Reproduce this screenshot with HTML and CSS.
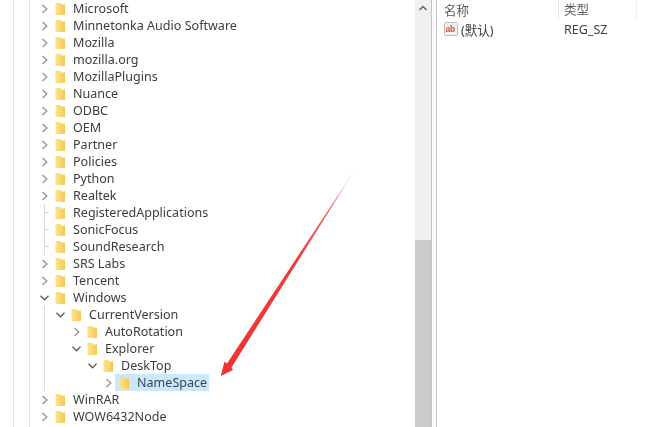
FILE: index.html
```html
<!DOCTYPE html>
<html lang="zh">
<head>
<meta charset="utf-8">
<title>Registry Editor</title>
<link rel="stylesheet" href="styles.css">
</head>
<body>
<svg class="defs" width="0" height="0" aria-hidden="true">
  <defs>
    <linearGradient id="fold" x1="0" x2="1" y1="0" y2="0">
      <stop offset="0" stop-color="#fbe391"/>
      <stop offset="0.55" stop-color="#f9d66f"/>
      <stop offset="1" stop-color="#f4c752"/>
    </linearGradient>
    <symbol id="folder" viewBox="0 0 10 12">
      <path d="M0.5 0 L5.5 0 L6 1.5 L10 1.5 L10 12 L0.5 12 Z" fill="url(#fold)"/>
    </symbol>
    <symbol id="right" viewBox="0 0 9 10">
      <path d="M2.5 1 L6.8 5 L2.5 9" fill="none" stroke="#999" stroke-width="1.4"/>
    </symbol>
    <symbol id="down" viewBox="0 0 9 10">
      <path d="M0.5 2.8 L4.5 6.8 L8.5 2.8" fill="none" stroke="#5e5e5e" stroke-width="1.4"/>
    </symbol>
  </defs>
</svg>
<main class="app">
  <div class="gutter outer"></div>
  <div class="gutter inner"></div>
  <section class="tree">
    <div class="row"><svg class="chev"><use href="#right"/></svg><svg class="fold"><use href="#folder"/></svg><span>Microsoft</span></div>
    <div class="row"><svg class="chev"><use href="#right"/></svg><svg class="fold"><use href="#folder"/></svg><span>Minnetonka Audio Software</span></div>
    <div class="row"><svg class="chev"><use href="#right"/></svg><svg class="fold"><use href="#folder"/></svg><span>Mozilla</span></div>
    <div class="row"><svg class="chev"><use href="#right"/></svg><svg class="fold"><use href="#folder"/></svg><span>mozilla.org</span></div>
    <div class="row"><svg class="chev"><use href="#right"/></svg><svg class="fold"><use href="#folder"/></svg><span>MozillaPlugins</span></div>
    <div class="row"><svg class="chev"><use href="#right"/></svg><svg class="fold"><use href="#folder"/></svg><span>Nuance</span></div>
    <div class="row"><svg class="chev"><use href="#right"/></svg><svg class="fold"><use href="#folder"/></svg><span>ODBC</span></div>
    <div class="row"><svg class="chev"><use href="#right"/></svg><svg class="fold"><use href="#folder"/></svg><span>OEM</span></div>
    <div class="row"><svg class="chev"><use href="#right"/></svg><svg class="fold"><use href="#folder"/></svg><span>Partner</span></div>
    <div class="row"><svg class="chev"><use href="#right"/></svg><svg class="fold"><use href="#folder"/></svg><span>Policies</span></div>
    <div class="row"><svg class="chev"><use href="#right"/></svg><svg class="fold"><use href="#folder"/></svg><span>Python</span></div>
    <div class="row"><svg class="chev"><use href="#right"/></svg><svg class="fold"><use href="#folder"/></svg><span>Realtek</span></div>
    <div class="group">
      <div class="row"><i class="tick"></i><svg class="fold"><use href="#folder"/></svg><span>RegisteredApplications</span></div>
      <div class="row"><i class="tick"></i><svg class="fold"><use href="#folder"/></svg><span>SonicFocus</span></div>
      <div class="row"><i class="tick"></i><svg class="fold"><use href="#folder"/></svg><span>SoundResearch</span></div>
    </div>
    <div class="row"><svg class="chev"><use href="#right"/></svg><svg class="fold"><use href="#folder"/></svg><span>SRS Labs</span></div>
    <div class="row"><svg class="chev"><use href="#right"/></svg><svg class="fold"><use href="#folder"/></svg><span>Tencent</span></div>
    <div class="row"><svg class="chev"><use href="#down"/></svg><svg class="fold"><use href="#folder"/></svg><span>Windows</span></div>
    <div class="group">
      <div class="row l1"><svg class="chev"><use href="#down"/></svg><svg class="fold"><use href="#folder"/></svg><span>CurrentVersion</span></div>
      <div class="row l2"><svg class="chev"><use href="#right"/></svg><svg class="fold"><use href="#folder"/></svg><span>AutoRotation</span></div>
      <div class="row l2"><svg class="chev"><use href="#down"/></svg><svg class="fold"><use href="#folder"/></svg><span>Explorer</span></div>
      <div class="row l3"><svg class="chev"><use href="#down"/></svg><svg class="fold"><use href="#folder"/></svg><span>DeskTop</span></div>
      <div class="row l4"><svg class="chev"><use href="#right"/></svg><div class="selected"><svg class="fold"><use href="#folder"/></svg><span>NameSpace</span></div></div>
    </div>
    <div class="row"><svg class="chev"><use href="#right"/></svg><svg class="fold"><use href="#folder"/></svg><span>WinRAR</span></div>
    <div class="row"><svg class="chev"><use href="#right"/></svg><svg class="fold"><use href="#folder"/></svg><span>WOW6432Node</span></div>
    <div class="row"><svg class="chev"><use href="#right"/></svg><svg class="fold"><use href="#folder"/></svg></div>
  </section>
  <div class="scrollbar">
    <svg class="up" width="10" height="8" viewBox="0 0 10 8"><path d="M1.5 6 L5 2.5 L8.5 6" fill="none" stroke="#606060" stroke-width="1.4"/></svg>
    <div class="thumb"></div>
  </div>
  <div class="splitter"></div>
  <section class="list">
    <div class="head">
      <div class="col name">名称</div>
      <div class="col type">类型</div>
      <div class="col rest"></div>
    </div>
    <div class="item">
      <div class="col name">
        <svg class="ab" width="15" height="14" viewBox="0 0 15 14">
          <rect x="0.5" y="0.5" width="13" height="13" rx="1" fill="#f6f1ef" stroke="#c4bcbc"/>
          <text x="1.4" y="10" class="abtext">ab</text>
        </svg>
        <span>(默认)</span>
      </div>
      <div class="col type">REG_SZ</div>
    </div>
  </section>
  <svg class="arrow" width="654" height="427" viewBox="0 0 654 427" aria-hidden="true">
    <defs>
      <linearGradient id="shaft" gradientUnits="userSpaceOnUse" x1="358" y1="165" x2="225" y2="372">
        <stop offset="0" stop-color="#f6b0b0" stop-opacity="0.3"/>
        <stop offset="0.2" stop-color="#ef6a6a"/>
        <stop offset="0.45" stop-color="#ee3c3c"/>
        <stop offset="1" stop-color="#f23333"/>
      </linearGradient>
    </defs>
    <path d="M358 165 L231.5 367.5 L233 370 L220.7 376 L224.5 361.5 L227 363.5 Z" fill="url(#shaft)"/>
  </svg>
</main>
</body>
</html>
```
FILE: styles.css
```css
html, body {
  margin: 0;
  padding: 0;
  background: #fff;
}
.defs {
  position: absolute;
}
.app {
  position: relative;
  display: flex;
  width: 654px;
  height: 427px;
  overflow: hidden;
  background: #fff;
  color: #3d3d3d;
  font-family: "Noto Sans", "Noto Sans CJK SC", sans-serif;
  font-size: 12.55px;
  filter: blur(0.5px);
}
.gutter {
  flex: none;
  border-right: 1px solid #e4e4e4;
}
.gutter.outer {
  width: 13px;
}
.gutter.inner {
  width: 15px;
  background: #fff;
}
.tree {
  flex: none;
  width: 385px;
  height: 427px;
  overflow: hidden;
}
.row {
  display: flex;
  align-items: center;
  height: 17px;
  padding-left: 10px;
  white-space: nowrap;
}
.row.l1 { padding-left: 26px; }
.row.l2 { padding-left: 42px; }
.row.l3 { padding-left: 58px; }
.row.l4 { padding-left: 74px; }
.group {
  background: linear-gradient(#dcdcdc, #dcdcdc) 14px 0 / 1px 100% no-repeat;
}
.chev {
  flex: none;
  width: 9px;
  height: 10px;
  margin-right: 6px;
}
.tick {
  flex: none;
  width: 9px;
  height: 1px;
  margin-right: 6px;
  background: linear-gradient(90deg, transparent 5px, #d4d4d4 5px);
}
.fold {
  flex: none;
  width: 10px;
  height: 12px;
  margin-right: 8px;
}
.selected {
  display: flex;
  align-items: center;
  height: 17px;
  width: 94px;
  background: #cce8ff;
  margin-left: -4px;
  padding-left: 4px;
  box-sizing: border-box;
  color: #3a4550;
}
.scrollbar {
  flex: none;
  position: relative;
  width: 16px;
  height: 427px;
  display: flex;
  flex-direction: column;
  align-items: center;
  background: #f0f0f0;
}
.up {
  margin-top: 4px;
}
.thumb {
  width: 100%;
  margin-top: 228px;
  flex: 1;
  background: #cbcbcb;
}
.splitter {
  flex: none;
  width: 4px;
  border-left: 1px solid #c4c4c4;
  border-right: 1px solid #c4c4c4;
  background: #fff;
}
.list {
  flex: 1;
  padding-left: 7px;
}
.head,
.item {
  display: flex;
  align-items: center;
}
.head {
  height: 19px;
  color: #5c5c5c;
}
.item {
  height: 20px;
}
.col.name {
  display: flex;
  align-items: center;
  gap: 2px;
  width: 114px;
  height: 100%;
  border-right: 1px solid transparent;
}
.head .col.name {
  border-right-color: #e6e6e6;
}
.col.type {
  padding-left: 5px;
  width: 72px;
}
.head .col.type {
  height: 100%;
  line-height: 19px;
  border-right: 1px solid #eeeeee;
}
.ab {
  flex: none;
}
.abtext {
  font-family: "Liberation Sans", sans-serif;
  font-size: 8.5px;
  font-weight: bold;
  fill: #e0502a;
}
.arrow {
  position: absolute;
  left: 0;
  top: 0;
}
```
